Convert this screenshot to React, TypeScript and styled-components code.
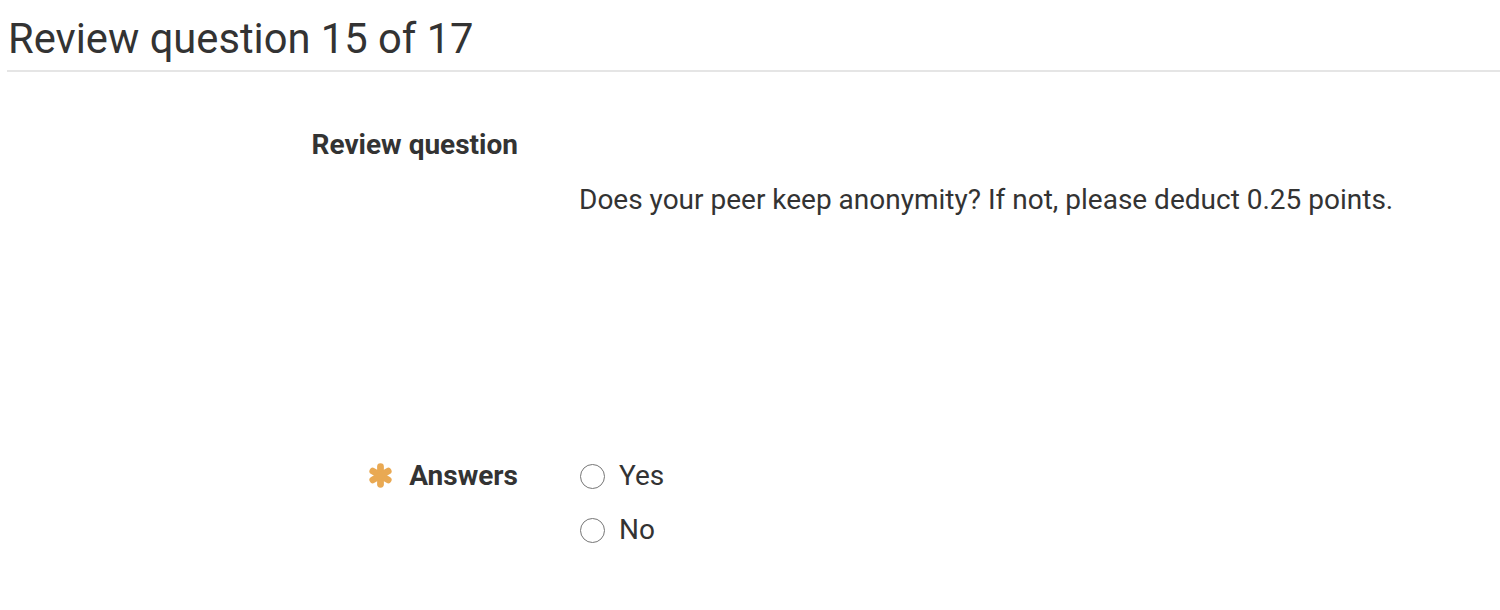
import React from "react";
import styled, { createGlobalStyle } from "styled-components";

const Global = createGlobalStyle`
  html, body { margin: 0; padding: 0; background: #ffffff; }
  body { font-family: Roboto, "Liberation Sans", Arial, sans-serif; color: #333333; }
`;

const Page = styled.div`
  width: 1500px;
  min-height: 610px;
  background: #fff;
`;

const Header = styled.div`
  margin-left: 7px;
  padding: 14px 0 7px 1px;
  border-bottom: 2px solid #e5e5e5;
`;

const Title = styled.h2`
  margin: 0;
  font-size: 41.7px;
  font-weight: 400;
  line-height: 49px;
  color: #333;
`;

const Form = styled.div`
  padding-top: 52px;
`;

const Row = styled.div<{ $gapAfter?: number }>`
  display: grid;
  grid-template-columns: 518px 1fr;
  column-gap: 61px;
  margin-bottom: ${(p) => p.$gapAfter ?? 0}px;
`;

const Label = styled.div`
  display: flex;
  justify-content: flex-end;
  align-items: center;
  gap: 16px;
  height: 41.5px;
  font-size: 28px;
  font-weight: 700;
  line-height: 41.5px;
  color: #333;
`;

const Content = styled.div`
  display: flex;
  flex-direction: column;
`;

const QText = styled.p`
  margin: 55px 0 0 0;
  font-size: 28px;
  line-height: 41.5px;
  color: #333;
`;

const Options = styled.div`
  display: flex;
  flex-direction: column;
  gap: 12.5px;
`;

const Option = styled.label`
  display: flex;
  align-items: center;
  height: 41.5px;
  font-size: 28px;
  line-height: 41.5px;
  color: #333;
`;

const Radio = styled.span`
  box-sizing: border-box;
  width: 25px;
  height: 25px;
  border-radius: 50%;
  border: 1.6px solid #767676;
  margin-left: 1px;
  margin-right: 14px;
  margin-top: 2px;
  background: #fff;
`;

const Req = styled.svg`
  width: 25px;
  height: 25px;
  flex: none;
  margin-top: 1px;
`;

const Asterisk = () => (
  <Req viewBox="0 0 24 24">
    <g stroke="#e9a953" strokeWidth="6.5" strokeLinecap="round">
      <line x1="12" y1="3.5" x2="12" y2="20.5" />
      <line x1="4.6" y1="7.75" x2="19.4" y2="16.25" />
      <line x1="4.6" y1="16.25" x2="19.4" y2="7.75" />
    </g>
  </Req>
);

export default function App() {
  return (
    <Page>
      <Global />
      <Header>
        <Title>Review question 15 of 17</Title>
      </Header>
      <Form>
        <Row $gapAfter={234}>
          <Label>Review question</Label>
          <Content>
            <QText>Does your peer keep anonymity? If not, please deduct 0.25 points.</QText>
          </Content>
        </Row>
        <Row>
          <Label>
            <Asterisk />
            Answers
          </Label>
          <Content>
            <Options>
              <Option>
                <Radio />
                Yes
              </Option>
              <Option>
                <Radio />
                No
              </Option>
            </Options>
          </Content>
        </Row>
      </Form>
    </Page>
  );
}
